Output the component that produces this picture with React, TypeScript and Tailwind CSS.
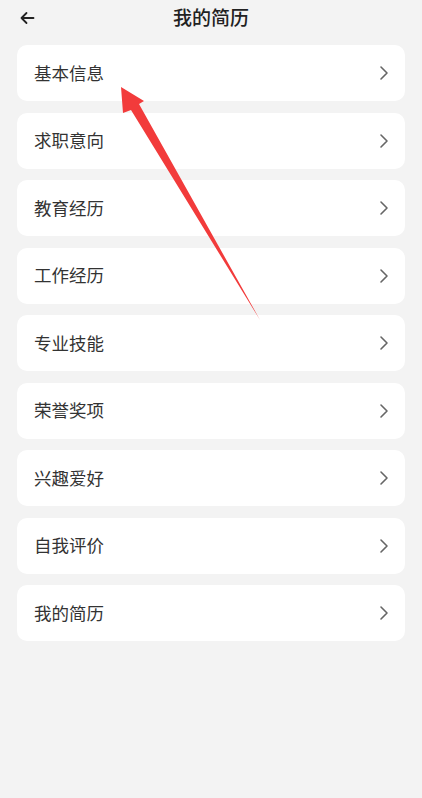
import { FC } from "react";

const items = [
  "基本信息",
  "求职意向",
  "教育经历",
  "工作经历",
  "专业技能",
  "荣誉奖项",
  "兴趣爱好",
  "自我评价",
  "我的简历",
];

const font = {
  fontFamily: '"Noto Sans CJK SC", "Noto Sans", sans-serif',
};

const Chevron: FC = () => (
  <svg width="10" height="16" viewBox="0 0 10 16" fill="none">
    <path d="M2 2l6 6-6 6" stroke="#666" strokeWidth="1.6" strokeLinecap="round" strokeLinejoin="round" />
  </svg>
);

export default function App() {
  return (
    <div className="relative w-[422px] min-h-[798px] bg-[#f3f3f3]" style={font}>
      <div className="relative h-[45px] flex items-center justify-center">
        <button className="absolute left-[15px] top-[6px] p-1">
          <svg width="16" height="16" viewBox="0 0 16 16" fill="none">
            <path d="M14.5 8H2.5M7.5 3L2.5 8l5 5" stroke="#222" strokeWidth="1.8" strokeLinecap="round" strokeLinejoin="round" />
          </svg>
        </button>
        <h1 className="text-[19px] font-medium text-[#222] -mt-[10px]">我的简历</h1>
      </div>
      <div className="px-[17px] flex flex-col gap-[11.5px]">
        {items.map((it) => (
          <div key={it} className="h-[56px] bg-white rounded-[10px] flex items-center justify-between pl-[17px] pr-[16px]">
            <span className="text-[17.5px] text-[#333]">{it}</span>
            <Chevron />
          </div>
        ))}
      </div>
      <svg className="absolute left-0 top-0 pointer-events-none" width="422" height="798">
        <polygon points="121,87 144,101 139,104 260,320 131,110 123,113" fill="#f23b3b" />
      </svg>
    </div>
  );
}
